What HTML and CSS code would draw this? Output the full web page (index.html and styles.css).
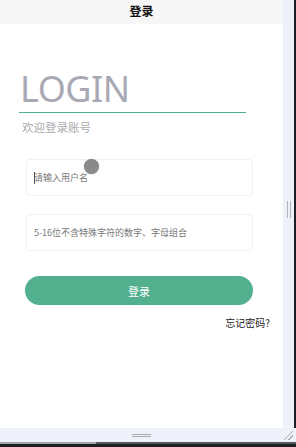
FILE: index.html
```html
<!DOCTYPE html>
<html lang="zh-CN">
<head>
    <meta charset="UTF-8">
    <meta name="viewport" content="width=device-width, initial-scale=1.0">
    <title>登录</title>
    <link rel="stylesheet" href="styles.css">
</head>
<body>
    <div class="device">
        <div class="device-top">
            <div class="viewport">
                <div class="nav-bar">登录</div>

                <div class="login-head">
                    <h1 class="login-title">LOGIN</h1>
                </div>
                <p class="login-sub">欢迎登录账号</p>

                <form class="login-form">
                    <div class="field">
                        <span class="caret"></span>
                        <input type="text" placeholder="请输入用户名">
                        <span class="touch-dot"></span>
                    </div>
                    <div class="field">
                        <input type="password" placeholder="5-16位不含特殊字符的数字、字母组合">
                    </div>
                    <button type="button" class="login-btn">登录</button>
                </form>
                <div class="forgot">忘记密码?</div>
            </div>
            <div class="vbar"><span class="grip-v"></span></div>
            <div class="edge-right"></div>
        </div>
        <div class="hbar">
            <span class="grip-h"></span>
            <span class="corner"></span>
        </div>
        <div class="edge-bottom"><span class="edge-thumb"></span></div>
    </div>
</body>
</html>
```

FILE: styles.css
```css
body {
    margin: 0;
    padding: 0;
    width: 296px;
    height: 447px;
    overflow: hidden;
    font-family: "Noto Sans", "Noto Sans CJK SC", sans-serif;
    background-color: #eef1f9;
}

.device {
    display: flex;
    flex-direction: column;
    height: 447px;
}

.device-top {
    display: flex;
    height: 428px;
}

.viewport {
    width: 283px;
    height: 428px;
    background-color: #fff;
    position: relative;
    overflow: hidden;
}

.nav-bar {
    height: 24px;
    line-height: 22px;
    background-color: #f7f7f7;
    text-align: center;
    font-family: "Noto Sans CJK SC", sans-serif;
    font-size: 12px;
    font-weight: bold;
    color: #111;
}

.login-head {
    margin: 47px 0 0 19px;
    width: 227px;
    border-bottom: 1px solid #52b08e;
    padding-bottom: 6px;
}

.login-title {
    margin: 0 0 0 1px;
    font-family: "Noto Sans", sans-serif;
    font-weight: normal;
    font-size: 36px;
    line-height: 35px;
    color: #a9a9b3;
    letter-spacing: -0.5px;
}

.login-sub {
    margin: 6px 0 0 22px;
    font-family: "Noto Sans CJK SC", sans-serif;
    font-size: 11.5px;
    line-height: 16px;
    color: #ababab;
}

.login-form {
    margin: 24px 0 0 26px;
    width: 227px;
    display: flex;
    flex-direction: column;
    gap: 18px;
}

.field {
    position: relative;
    height: 35px;
    border: 1px solid #f1f1f1;
    border-radius: 4px;
    display: flex;
    align-items: center;
}

.field input {
    border: none;
    outline: none;
    background: transparent;
    width: 100%;
    height: 100%;
    padding: 0 0 0 7px;
    font-family: "Noto Sans CJK SC", sans-serif;
    font-size: 9px;
    color: #333;
}

.field input::placeholder {
    color: #777;
}

.caret {
    position: absolute;
    left: 7px;
    top: 12px;
    width: 1px;
    height: 12px;
    background-color: #555;
}

.touch-dot {
    position: absolute;
    left: 57px;
    top: -1px;
    width: 15px;
    height: 15px;
    border-radius: 50%;
    background-color: #8a8a8a;
    box-shadow: 0 0 1px #8a8a8a;
}

.login-btn {
    margin-top: 7px;
    margin-left: -1px;
    width: 228px;
    height: 29px;
    border: none;
    border-radius: 15px;
    background-color: #52b08e;
    color: #fff;
    font-family: "Noto Sans CJK SC", sans-serif;
    font-size: 11px;
}

.forgot {
    margin: 11px 13px 0 0;
    text-align: right;
    font-family: "Noto Sans CJK SC", sans-serif;
    font-size: 10px;
    line-height: 14px;
    color: #222;
}

.vbar {
    width: 11px;
    background-color: #eef1f9;
    display: flex;
    justify-content: center;
    padding-top: 201px;
    box-sizing: border-box;
}

.grip-v {
    width: 4px;
    height: 17px;
    border-left: 1px solid #b0b3b8;
    border-right: 1px solid #b0b3b8;
    box-sizing: border-box;
}

.edge-right {
    width: 2px;
    background-color: #1f2023;
}

.hbar {
    height: 14px;
    position: relative;
    display: flex;
    justify-content: center;
    align-items: center;
    background-color: #eef1f9;
    padding-right: 13px;
}

.grip-h {
    width: 19px;
    height: 3px;
    border-top: 1px solid #a8abb0;
    border-bottom: 1px solid #a8abb0;
    box-sizing: border-box;
}

.corner {
    position: absolute;
    right: 3px;
    bottom: 2px;
    width: 9px;
    height: 9px;
    background: linear-gradient(135deg, transparent 45%, #a8abb0 45%, #a8abb0 55%, transparent 55%, transparent 70%, #a8abb0 70%, #a8abb0 80%, transparent 80%);
}

.edge-bottom {
    height: 5px;
    background-color: #1f2023;
    border-top: 2px solid #55575b;
    box-sizing: border-box;
    position: relative;
}

.edge-thumb {
    position: absolute;
    left: 0;
    top: -2px;
    width: 96px;
    height: 2px;
    background-color: #a3a5aa;
}
```
